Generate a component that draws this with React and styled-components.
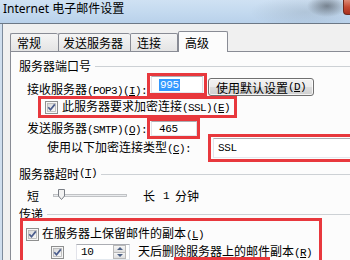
import React from 'react';
import styled, { createGlobalStyle } from 'styled-components';

const Global = createGlobalStyle`
  html, body { margin: 0; padding: 0; width: 350px; height: 260px; overflow: hidden; background: #f0f0f0; }
  body { font-family: "Noto Sans CJK SC", sans-serif; font-size: 12px; line-height: 13px; color: #000; }
`;

const Page = styled.div`
  width: 350px; height: 260px; overflow: hidden;
  display: flex; flex-direction: column;
  background: #cfdeee;
`;

const TitleBar = styled.div`
  height: 23px; flex: none; display: flex; align-items: flex-start;
  border-bottom: 1px solid #6c7886;
  background:
    radial-gradient(ellipse 20px 11px at 327px 6px, rgba(58,64,72,0.55), rgba(58,64,72,0) 100%),
    radial-gradient(ellipse 55px 16px at 305px 12px, rgba(120,135,150,0.25), rgba(120,135,150,0) 100%),
    linear-gradient(180deg, #cfe1f3 0%, #c3d9ef 55%, #b9d1ea 100%);
`;

const Title = styled.div`
  padding: 2px 0 0 3px;
  font-family: "Noto Sans", "Noto Sans CJK SC", sans-serif;
  font-size: 12px; line-height: 14px; color: #000; white-space: nowrap;
`;

const CloseBtn = styled.div`
  margin-left: auto; width: 7px; height: 15px; box-sizing: border-box;
  border-left: 1px solid #6e2a1e; border-bottom: 1px solid #6e2a1e;
  border-radius: 0 0 0 4px;
  background: linear-gradient(180deg, #dc8a75 0%, #c44b33 50%, #a9301d 100%);
`;

const Body = styled.div`
  flex: 1; min-height: 0; margin-left: 2px;
  border-left: 1px solid #7d8b9c;
  background: #f0f0f0;
  display: flex; flex-direction: column;
`;

const TabStrip = styled.div`
  height: 27px; flex: none; display: flex; align-items: flex-end;
  padding-left: 7px; position: relative; z-index: 1;
`;

const Tab = styled.div`
  box-sizing: border-box; flex: none;
  width: ${p => p.$w}px;
  height: ${p => (p.$active ? 21 : 18)}px;
  margin-bottom: ${p => (p.$active ? -1 : 0)}px;
  padding-left: ${p => p.$pad}px;
  border: 1px solid #898c95; border-bottom: none;
  border-right: ${p => (p.$right ? '1px solid #898c95' : 'none')};
  border-radius: 2px 2px 0 0;
  background: ${p => (p.$active ? '#fcfcfc' : 'linear-gradient(180deg, #f5f5f5 0%, #e4e4e4 100%)')};
  display: flex; align-items: center;
  font-size: 12px; line-height: 13px; white-space: nowrap;
`;

const Panel = styled.div`
  flex: 1; margin-left: 7px;
  border-top: 1px solid #898c95; border-left: 1px solid #898c95;
  background: #fcfcfc;
  padding: 7px 0 0 8px;
  display: flex; flex-direction: column;
`;

const Group = styled.div`
  flex: none; display: flex; align-items: center; height: 13px;
  margin-top: ${p => p.$mt || 0}px;
  white-space: nowrap;
  &::after {
    content: ''; flex: 1; margin-left: ${p => p.$gap || 4}px; margin-top: 1px;
    border-top: 1px solid #cdd1d5;
  }
`;

const Row = styled.div`
  flex: none; display: flex;
  align-items: ${p => p.$align || 'center'};
  height: ${p => p.$h}px;
  padding-left: ${p => p.$indent || 0}px;
  margin-top: ${p => p.$mt || 0}px;
`;

const Label = styled.span`
  flex: none; white-space: nowrap; font-size: 12px; line-height: 13px;
  margin-top: ${p => p.$mt || 0}px;
  margin-left: ${p => p.$ml || 0}px;
`;

const Lat = styled.span`
  font-family: "Liberation Mono", monospace; font-size: 11px; letter-spacing: -0.6px;
`;

const Key = styled.span`
  text-decoration: underline; text-underline-offset: 1px;
`;

const Mark = styled.div`
  box-sizing: border-box; flex: none;
  border: 3px solid #e8383d;
  width: ${p => p.$w}px; height: ${p => p.$h}px;
  margin-top: ${p => p.$mt || 0}px;
  margin-left: ${p => p.$ml || 0}px;
  padding: ${p => p.$pad || '0'};
  display: flex; align-items: center;
`;

const MarkColumn = styled(Mark)`
  flex-direction: column; align-items: stretch;
`;

const Field = styled.div`
  box-sizing: border-box; flex: 1; height: ${p => p.$h}px;
  border: 1px solid; border-color: #abadb3 #dbdfe6 #e3e9ef #e2e3ea;
  background: #fff;
  display: flex; align-items: center;
  padding-left: ${p => p.$pl}px;
  font-family: "Liberation Mono", monospace; font-size: 11px; letter-spacing: -0.4px;
  line-height: 12px; white-space: nowrap;
`;

const Sel = styled.span`
  background: #3399ff; color: #fff; padding: 0 1px;
`;

const Button = styled.div`
  box-sizing: border-box; flex: none;
  width: 106px; height: 18px; margin: 6px 0 0 1px;
  border: 1px solid #707070; border-radius: 3px;
  background: linear-gradient(180deg, #f2f2f2 0%, #ebebeb 50%, #dddddd 51%, #cfcfcf 100%);
  box-shadow: inset 0 0 0 1px rgba(255,255,255,0.75);
  display: flex; align-items: center; justify-content: center;
  font-size: 12px; line-height: 13px; white-space: nowrap;
`;

const CheckSvg = styled.svg`
  flex: none; display: block;
  margin-left: ${p => p.$ml || 0}px;
  margin-right: ${p => p.$mr || 0}px;
`;

const SliderSvg = styled.svg`
  flex: none; display: block; margin-left: 14px;
`;

const Spin = styled.div`
  box-sizing: border-box; flex: none;
  width: 54px; height: 16px; margin-left: 12px;
  border: 1px solid; border-color: #abadb3 #dbdfe6 #e3e9ef #e2e3ea;
  background: #fff;
  display: flex; align-items: center;
  padding-left: 4px; padding-right: 3px;
  font-family: "Liberation Mono", monospace; font-size: 11px; letter-spacing: -0.4px;
`;

const SpinText = styled.span` flex: 1; `;

const SpinBtns = styled.div`
  flex: none; width: 13px; height: 14px;
  display: flex; flex-direction: column;
`;

const SpinBtn = styled.div`
  flex: 1; box-sizing: border-box;
  border: 1px solid #b9b9b9;
  ${p => (p.$down ? 'border-top: none;' : '')}
  background: linear-gradient(180deg, #f6f6f6, #dedede);
  display: flex; align-items: center; justify-content: center;
  &::after {
    content: ''; width: 0; height: 0;
    border-left: 3px solid transparent; border-right: 3px solid transparent;
    ${p => (p.$down ? 'border-top: 3px solid #4d6185;' : 'border-bottom: 3px solid #4d6185;')}
  }
`;

const Underlined = styled.span`
  display: inline-block; line-height: 13px;
  border-bottom: 3px solid #e8383d;
`;

const CheckBox = ({ ml, mr }) => (
  <CheckSvg width="13" height="13" viewBox="0 0 13 13" $ml={ml} $mr={mr}>
    <defs>
      <linearGradient id="cbg" x1="0" y1="0" x2="1" y2="1">
        <stop offset="0" stopColor="#d6d6d6" />
        <stop offset="1" stopColor="#fbfbfb" />
      </linearGradient>
    </defs>
    <rect x="0.5" y="0.5" width="12" height="12" fill="#f6f6f6" stroke="#8e8f8f" />
    <rect x="2.5" y="2.5" width="8" height="8" fill="url(#cbg)" stroke="#b3b3b3" strokeWidth="0.8" />
    <path d="M3.3 6.3 L5.5 8.8 L9.8 3.4" fill="none" stroke="#4a5c8c" strokeWidth="1.7" />
  </CheckSvg>
);

const Slider = () => (
  <SliderSvg width="74" height="14" viewBox="0 0 74 14">
    <rect x="0.5" y="6.5" width="73" height="2" fill="#e9ebed" stroke="#b3b6ba" strokeWidth="0.8" />
    <path d="M5.5 1.5 H11.5 V8 L8.5 11.5 L5.5 8 Z" fill="#f2f2f2" stroke="#7b7f86" />
  </SliderSvg>
);

export default function App() {
  return (
    <>
      <Global />
      <Page>
        <TitleBar>
          <Title>Internet 电子邮件设置</Title>
          <CloseBtn />
        </TitleBar>
        <Body>
          <TabStrip>
            <Tab $w={48} $pad={6}>常规</Tab>
            <Tab $w={72} $pad={4}>发送服务器</Tab>
            <Tab $w={48} $pad={6} $right>连接</Tab>
            <Tab $w={50} $pad={6} $active $right>高级</Tab>
          </TabStrip>
          <Panel>
            <Group>服务器端口号</Group>
            <Row $h={24} $align="flex-start" $indent={8}>
              <Label $mt={10}>接收服务器<Lat>(POP3)(<Key>I</Key>):</Lat></Label>
              <Mark $w={60} $h={23} $mt={1} $pad="0 1px 0 1px">
                <Field $h={17} $pl={7}><Sel>995</Sel></Field>
              </Mark>
              <Button>使用默认设置<Lat>(<Key>D</Key>)</Lat></Button>
            </Row>
            <Row $h={22}>
              <Mark $w={199} $h={22} $ml={19} $pad="0 0 0 4px">
                <CheckBox mr={4} />
                <Label>此服务器要求加密连接<Lat>(SSL)(<Key>E</Key>)</Lat></Label>
              </Mark>
            </Row>
            <Row $h={21} $indent={8}>
              <Label>发送服务器<Lat>(SMTP)(<Key>O</Key>):</Lat></Label>
              <Mark $w={53} $h={21} $pad="0 0 0 1px">
                <Field $h={15} $pl={7}>465</Field>
              </Mark>
            </Row>
            <Row $h={18} $indent={28}>
              <Label>使用以下加密连接类型<Lat>(<Key>C</Key>):</Lat></Label>
              <Mark $w={170} $h={28} $ml={17} $pad="0 0 0 2px">
                <Field $h={20} $pl={4}>SSL</Field>
              </Mark>
            </Row>
            <Group $mt={10}>服务器超时<Lat>(<Key>T</Key>)</Lat></Group>
            <Row $h={24} $mt={3} $indent={8}>
              <Label>短</Label>
              <Slider />
              <Label $ml={16}>长</Label>
              <Label $ml={8}><Lat>1</Lat></Label>
              <Label $ml={6}>分钟</Label>
            </Row>
            <Group>传递</Group>
            <MarkColumn $w={302} $h={46} $mt={-2} $ml={1} $pad="4px 0 0 3px">
              <Row $h={18}>
                <CheckBox mr={3} />
                <Label>在服务器上保留邮件的副本<Lat>(<Key>L</Key>)</Lat></Label>
              </Row>
              <Row $h={18} $indent={25}>
                <CheckBox />
                <Spin>
                  <SpinText>10</SpinText>
                  <SpinBtns>
                    <SpinBtn />
                    <SpinBtn $down />
                  </SpinBtns>
                </Spin>
                <Label $ml={8}>天后删<Underlined>除服务器上的邮件</Underlined>副本<Lat>(<Key>R</Key>)</Lat></Label>
              </Row>
            </MarkColumn>
          </Panel>
        </Body>
      </Page>
    </>
  );
}
